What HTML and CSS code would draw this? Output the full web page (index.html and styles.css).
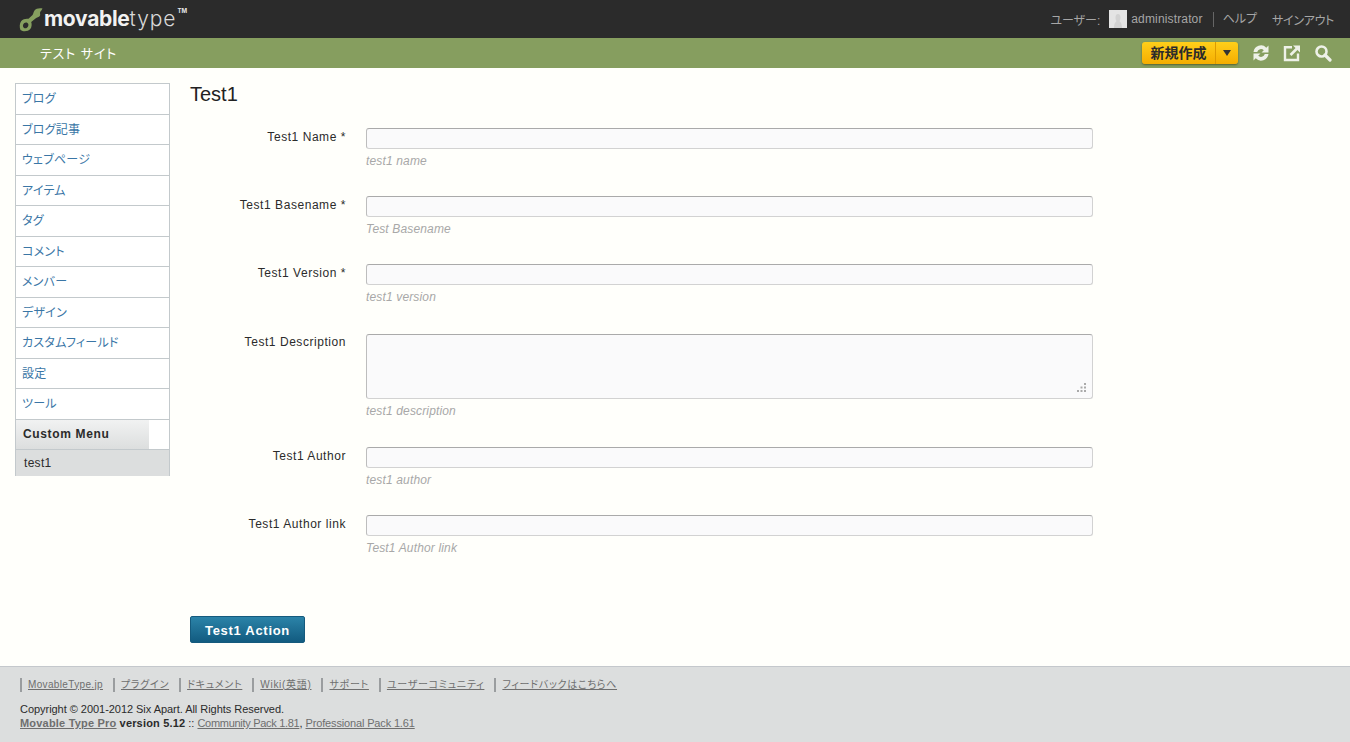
FILE: index.html
```html
<!DOCTYPE html>
<html lang="ja">
<head>
<meta charset="utf-8">
<title>Test1</title>
<link rel="stylesheet" href="styles.css">
</head>
<body>
<header class="top">
  <div class="logo">
    <svg class="wrench" width="24" height="25" viewBox="0 0 24 25"><path d="M23.500 1.500 C20 1 17 1.500 15.500 3.500 C14.300 5 14.500 7 13.300 8.300 L9.500 11.800 C7 11.300 4 12 2.300 14 C0.500 16.200 0.300 20 1.500 23 L3.500 24 C6.500 24.600 9.500 24 11.300 22 C12.800 20.200 13 17 12.200 15 L16.500 11.500 C18 10.300 19.800 10.500 20.800 9 C21.800 7.500 20.500 6.500 21.200 5 C21.700 4 23 3 23.500 1.500 Z M5.300 16 C6.800 15 8.800 15.500 9.300 17 C9.800 18.700 8.800 20.700 7.200 21.200 C5.700 21.700 4.200 20.700 4 19.200 C3.800 18 4.300 16.700 5.300 16 Z" fill="#86a05f" fill-rule="evenodd"/></svg>
    <span class="logo-bold">movable</span><span class="logo-thin">type</span><span class="tm">TM</span>
  </div>
  <nav class="user-nav">
    <span class="user-label">ユーザー:</span>
    <svg class="avatar" width="18" height="18" viewBox="0 0 18 18"><rect width="18" height="18" fill="#e4e4e4"/><path d="M5 18 C5 13 7 12 7.500 11 C6 9 6 4 9 4 C12 4 12 9 10.500 11 C11 12 13 13 13 18 Z" fill="#d2d2d2"/></svg>
    <span class="user-name">administrator</span>
    <span class="nav-help">ヘルプ</span>
    <span class="nav-out">サインアウト</span>
  </nav>
</header>
<div class="sitebar">
  <span class="site-name">テスト サイト</span>
  <div class="tools">
    <div class="new-btn"><span class="new-main">新規作成</span><span class="new-arrow"></span></div>
    <svg class="tool" width="18" height="18" viewBox="0 0 18 18"><path d="M1.500 8 A7.500 7.500 0 0 1 14.300 3.700 L16.500 1.500 V8.500 H9.500 L11.800 6.200 A4 4 0 0 0 5.200 8 Z M16.500 10 A7.500 7.500 0 0 1 3.700 14.300 L1.500 16.500 V9.500 H8.500 L6.200 11.800 A4 4 0 0 0 12.800 10 Z" fill="#eef1e8"/></svg>
    <svg class="tool" width="18" height="18" viewBox="0 0 18 18"><path d="M9 3.200 H2 V16 H15 V9.500" fill="none" stroke="#eef1e8" stroke-width="2.400"/><path d="M10 1.500 H17 V8.500 Z" fill="#eef1e8"/><path d="M14 4.500 L7.500 11" stroke="#eef1e8" stroke-width="2.600" fill="none"/></svg>
    <svg class="tool" width="18" height="18" viewBox="0 0 18 18"><circle cx="7.500" cy="7.500" r="5" fill="none" stroke="#eef1e8" stroke-width="2.600"/><path d="M11 11 L16 16" stroke="#eef1e8" stroke-width="3.200" stroke-linecap="round"/></svg>
  </div>
</div>
<div class="main">
  <aside class="side">
    <a class="side-item">ブログ</a>
    <a class="side-item">ブログ記事</a>
    <a class="side-item">ウェブページ</a>
    <a class="side-item">アイテム</a>
    <a class="side-item">タグ</a>
    <a class="side-item">コメント</a>
    <a class="side-item">メンバー</a>
    <a class="side-item">デザイン</a>
    <a class="side-item">カスタムフィールド</a>
    <a class="side-item">設定</a>
    <a class="side-item">ツール</a>
    <div class="side-head"><span class="side-head-label">Custom Menu</span></div>
    <div class="side-sub">test1</div>
  </aside>
  <section class="content">
    <h1 class="title">Test1</h1>
    <div class="field">
      <label class="field-label">Test1 Name *</label>
      <div class="field-body"><div class="input"></div><p class="hint">test1 name</p></div>
    </div>
    <div class="field">
      <label class="field-label">Test1 Basename *</label>
      <div class="field-body"><div class="input"></div><p class="hint">Test Basename</p></div>
    </div>
    <div class="field">
      <label class="field-label">Test1 Version *</label>
      <div class="field-body"><div class="input"></div><p class="hint">test1 version</p></div>
    </div>
    <div class="field f-desc">
      <label class="field-label">Test1 Description</label>
      <div class="field-body">
        <div class="input textarea">
          <svg class="grip" width="11" height="11" viewBox="0 0 11 11"><path d="M8 1h2v2H8zM4.500 4.500h2v2h-2zM8 4.500h2v2H8zM1 8h2v2H1zM4.500 8h2v2h-2zM8 8h2v2H8z" fill="#aaa"/></svg>
        </div>
        <p class="hint">test1 description</p>
      </div>
    </div>
    <div class="field">
      <label class="field-label">Test1 Author</label>
      <div class="field-body"><div class="input"></div><p class="hint">test1 author</p></div>
    </div>
    <div class="field">
      <label class="field-label">Test1 Author link</label>
      <div class="field-body"><div class="input"></div><p class="hint">Test1 Author link</p></div>
    </div>
    <button class="action" type="button">Test1 Action</button>
  </section>
</div>
<footer class="foot">
  <ul class="foot-links">
    <li class="foot-link foot-link-latin"><a>MovableType.jp</a></li>
    <li class="foot-link"><a>プラグイン</a></li>
    <li class="foot-link"><a>ドキュメント</a></li>
    <li class="foot-link"><a>Wiki(英語)</a></li>
    <li class="foot-link"><a>サポート</a></li>
    <li class="foot-link"><a>ユーザーコミュニティ</a></li>
    <li class="foot-link"><a>フィードバックはこちらへ</a></li>
  </ul>
  <p class="copy">Copyright © 2001-2012 Six Apart. All Rights Reserved.</p>
  <p class="ver"><a class="ver-name">Movable Type Pro</a> <b class="ver-num">version 5.12</b> :: <a class="ver-comm">Community Pack 1.81</a>, <a class="ver-prof">Professional Pack 1.61</a></p>
</footer>
</body>
</html>
```
FILE: styles.css
```css
* { box-sizing: border-box; }
html, body { margin: 0; padding: 0; }
body {
  width: 1350px;
  height: 742px;
  overflow: hidden;
  background: #fffffb;
  color: #2b2b2b;
  font-family: "Liberation Sans", Arial, "Noto Sans CJK JP", sans-serif;
  font-feature-settings: "palt";
  font-size: 12px;
  display: flex;
  flex-direction: column;
}
.top {
  height: 38px;
  flex: none;
  background: #2b2b2b;
  display: flex;
  align-items: center;
  justify-content: space-between;
  padding: 0 16px 0 19px;
}
.logo {
  display: flex;
  align-items: baseline;
  color: #fff;
  font-family: "Inter", "Liberation Sans", sans-serif;
  font-size: 21px;
  line-height: 38px;
  position: relative;
  letter-spacing: -0.3px;
  margin-top: -1px;
}
.wrench { align-self: center; margin-right: 1px; margin-top: 2px; }
.logo-bold { font-weight: 700; color: #f2f2f2; }
.logo-thin { font-weight: 300; color: #d8d8d8; letter-spacing: .9px; }
.tm {
  font-size: 6px;
  font-weight: 700;
  letter-spacing: 0;
  align-self: flex-start;
  line-height: 6px;
  margin: 8px 0 0 1px;
  color: #e8e8e8;
}
.user-nav {
  display: flex;
  align-items: center;
  color: #a6a6a6;
  font-size: 12px;
}
.user-name { letter-spacing: .15px; }
.avatar { margin: 0 4px 0 9px; }
.nav-help {
  margin-left: 10px;
  padding-left: 9px;
  border-left: 1px solid #666;
  line-height: 15px;
}
.nav-out { margin-left: 15px; letter-spacing: -.3px; }
.sitebar {
  height: 30px;
  flex: none;
  background: #869e5f;
  display: flex;
  align-items: center;
  justify-content: space-between;
  padding: 0 18px 0 40px;
}
.site-name {
  color: #fff;
  font-size: 13px;
  font-weight: 400;
  margin-top: -2px;
  letter-spacing: .9px;
}
.tools { display: flex; align-items: center; gap: 13px; }
.new-btn {
  width: 96px;
  height: 22px;
  display: flex;
  border-radius: 3px;
  background: linear-gradient(#ffcf1a, #f5ad00);
  box-shadow: 0 1px 2px rgba(50, 60, 20, .6);
  margin-right: 1px;
}
.new-main {
  width: 74px;
  text-align: center;
  color: #2b2b2b;
  font-size: 14px;
  font-weight: 700;
  line-height: 23px;
  border-right: 1px solid #dd9a00;
}
.new-arrow {
  width: 0;
  height: 0;
  margin: 8px 0 0 7px;
  border-style: solid;
  border-width: 6px 4px 0;
  border-color: #333 transparent transparent;
}
.tool { display: block; }
.main { flex: 1; display: flex; padding: 15px 0 0 15px; min-height: 0; }
.side { width: 155px; flex: none; }
.side-item {
  display: block;
  height: 30.55px;
  line-height: 30px;
  padding-left: 6px;
  background: #fff;
  border: 1px solid #c3c9cc;
  border-bottom: 0;
  color: #3a76a6;
  font-size: 12px;
  letter-spacing: .25px;
}
.side-head {
  height: 31px;
  background: #fff;
  border: 1px solid #c3c9cc;
  border-bottom: 1px solid #c3c9cc;
  font-weight: 700;
  font-size: 12px;
  line-height: 29px;
}
.side-head-label {
  display: block;
  width: 133px;
  height: 29px;
  padding-left: 7px;
  letter-spacing: .65px;
  background: linear-gradient(#f1f2f2, #dcdede);
}
.side-sub {
  height: 26px;
  padding-left: 8px;
  line-height: 27px;
  background: #dcdede;
  border-left: 1px solid #c3c9cc;
  border-right: 1px solid #c3c9cc;
  letter-spacing: .3px;
}
.content { flex: 1; padding-left: 20px; }
.title {
  margin: 0;
  font-size: 20px;
  font-weight: 400;
  line-height: 23px;
  color: #222;
  height: 45px;
  padding-top: 0;
}
.field { display: flex; height: 68px; }
.f-desc { height: 115px; padding-top: 2px; }
.field-label {
  width: 156px;
  padding-top: 1px;
  text-align: right;
  line-height: 16px;
  flex: none;
  letter-spacing: .55px;
}
.f-desc .field-label { padding-top: 0; }
.field-body { margin-left: 20px; width: 727px; }
.input {
  height: 21px;
  background: #fafafb;
  border: 1px solid #d2d2d2;
  border-top-color: #aaa;
  border-left-color: #bdbdbd;
  border-radius: 3px;
}
.textarea { height: 65px; position: relative; }
.grip { position: absolute; right: 5px; bottom: 5px; }
.hint {
  margin: 5px 0 0;
  color: #a8a8a8;
  font-style: italic;
  font-size: 12px;
  line-height: 15px;
  letter-spacing: .15px;
}
.action {
  display: block;
  width: 115px;
  height: 27px;
  margin-top: 33px;
  padding: 1px 0 0;
  border: 1px solid #155a7d;
  border-radius: 2px;
  background: linear-gradient(#2b83a8, #125b80);
  color: #fff;
  font-family: inherit;
  font-size: 13px;
  font-weight: 700;
  letter-spacing: .7px;
}
.foot {
  height: 76px;
  flex: none;
  background: #dcdede;
  border-top: 1px solid #c4c8cc;
  padding: 10px 0 0 20px;
  font-size: 11px;
}
.foot-links {
  list-style: none;
  margin: 0;
  padding: 0;
  display: flex;
  gap: 10px;
  height: 15px;
  align-items: center;
  font-size: 10px;
}
.foot-link {
  border-left: 2px solid #9a9d9f;
  padding-left: 6px;
  line-height: 14px;
  color: #6e6e6e;
  letter-spacing: .7px;
}
.foot-link-latin { letter-spacing: .35px; }
.foot-link a { text-decoration: underline; }
.copy { margin: 10px 0 0; line-height: 14px; color: #2b2b2b; font-size: 11px; letter-spacing: -.04px; }
.ver { margin: 0; line-height: 14px; color: #2b2b2b; font-size: 11px; }
.ver a { color: #6e6e6e; text-decoration: underline; }
.ver-name { font-weight: 700; letter-spacing: .2px; }
.ver-num { letter-spacing: .17px; }
.ver-comm { letter-spacing: -.3px; }
.ver-prof { letter-spacing: -.15px; }
```
